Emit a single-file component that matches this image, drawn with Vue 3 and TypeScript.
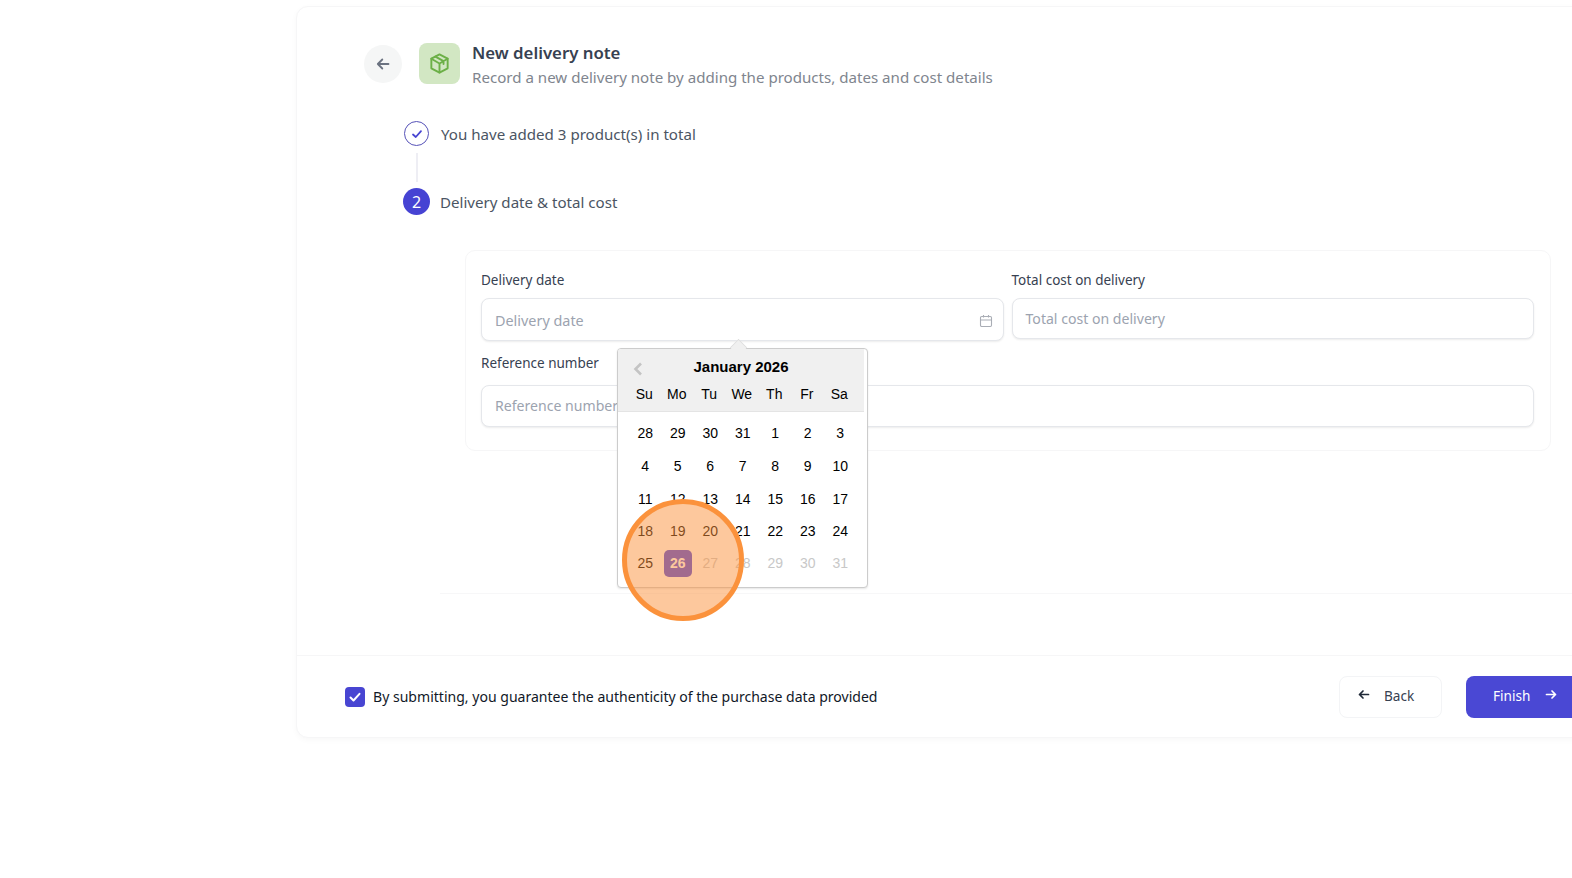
<script setup lang="ts">
const weekdays: string[] = ['Su', 'Mo', 'Tu', 'We', 'Th', 'Fr', 'Sa']

interface CalendarDay {
  label: number
  muted?: boolean
  selected?: boolean
}

const days: CalendarDay[] = [
  ...[28, 29, 30, 31].map((label) => ({ label })),
  ...Array.from({ length: 26 }, (_, i) => ({ label: i + 1, selected: i === 25 })),
  ...[27, 28, 29, 30, 31].map((label) => ({ label, muted: true })),
]
</script>

<template>
  <div class="page">
    <section class="card">
      <div class="content">
        <header class="head">
          <button class="back-round" type="button">
            <svg width="16" height="16" viewBox="0 0 16 16" fill="none" stroke="#6b7280" stroke-width="1.8" stroke-linecap="round" stroke-linejoin="round">
              <path d="M13.5 8H2.8M7.3 3.5 2.8 8l4.500 4.500" />
            </svg>
          </button>
          <div class="box-icon">
            <svg width="23" height="23" viewBox="0 0 24 24" fill="none" stroke="#6cb047" stroke-width="2" stroke-linejoin="round" stroke-linecap="round">
              <path d="M12 2.500 20.500 7v10L12 21.500 3.500 17V7z" />
              <path d="M3.500 7 12 12l8.500-5M12 12v9.500M7.800 4.800l8.400 4.800v3" />
            </svg>
          </div>
          <div class="head-text">
            <h1 class="title">New delivery note</h1>
            <p class="subtitle">Record a new delivery note by adding the products, dates and cost details</p>
          </div>
        </header>

        <div class="steps">
          <div class="step">
            <span class="step-done">
              <svg width="12" height="12" viewBox="0 0 12 12" fill="none" stroke="#4845d2" stroke-width="1.800" stroke-linecap="round" stroke-linejoin="round">
                <path d="M2 6.500 4.800 9 10 3.200" />
              </svg>
            </span>
            <span>You have added 3 product(s) in total</span>
          </div>
          <div class="step-line"></div>
          <div class="step">
            <span class="step-num">2</span>
            <span>Delivery date &amp; total cost</span>
          </div>
        </div>

        <div class="form-card">
          <div class="form-row">
            <div class="field date-field">
              <label class="label">Delivery date</label>
              <div class="input date-input">
                <span>Delivery date</span>
                <svg width="14" height="14" viewBox="0 0 14 14" fill="none" stroke="#a9adb5" stroke-width="1.100">
                  <rect x="1.500" y="2.500" width="11" height="10" rx="1.200" />
                  <path d="M1.500 6h11M4.500 1v2.500M9.500 1v2.500" />
                </svg>
              </div>

              <div class="calendar">
                <div class="calendar-arrow"></div>
                <div class="calendar-head">
                  <svg class="calendar-prev" width="10" height="14" viewBox="0 0 10 14" fill="none" stroke="#c4c4c4" stroke-width="2.600">
                    <path d="M8 1.500 2.500 7 8 12.500" />
                  </svg>
                  <div class="calendar-title">January 2026</div>
                  <div class="calendar-weekdays">
                    <span v-for="name in weekdays" :key="name">{{ name }}</span>
                  </div>
                </div>
                <div class="calendar-days">
                  <span
                    v-for="(day, i) in days"
                    :key="i"
                    class="day"
                    :class="{ muted: day.muted, selected: day.selected }"
                  >{{ day.label }}</span>
                </div>
              </div>
            </div>
            <div class="field">
              <label class="label">Total cost on delivery</label>
              <div class="input cost-input">Total cost on delivery</div>
            </div>
          </div>
          <div class="field ref-field">
            <label class="label">Reference number</label>
            <div class="input ref-input">Reference number</div>
          </div>
        </div>

        <div class="divider"></div>
      </div>

      <footer class="foot">
        <label class="agree">
          <span class="checkbox">
            <svg width="14" height="14" viewBox="0 0 14 14" fill="none" stroke="#fff" stroke-width="2" stroke-linecap="round" stroke-linejoin="round">
              <path d="M2.500 7.500 5.500 10.500 11.500 3.800" />
            </svg>
          </span>
          By submitting, you guarantee the authenticity of the purchase data provided
        </label>
        <div class="actions">
          <button class="btn btn-back" type="button">
            <svg width="12" height="12" viewBox="0 0 12 12" fill="none" stroke="#1f2937" stroke-width="1.700" stroke-linecap="round" stroke-linejoin="round">
              <path d="M10.500 5.500H1.500M5 2 1.500 5.500 5 9" />
            </svg>
            <span>Back</span>
          </button>
          <button class="btn btn-finish" type="button">
            <span>Finish</span>
            <svg width="12" height="12" viewBox="0 0 12 12" fill="none" stroke="#fff" stroke-width="1.700" stroke-linecap="round" stroke-linejoin="round">
              <path d="M1.500 5.500h9M7 2l3.500 3.500L7 9" />
            </svg>
          </button>
        </div>
      </footer>
    </section>

    <div class="click-marker"></div>
  </div>
</template>

<style>
html,
body {
  margin: 0;
  background: #fff;
  overflow: hidden;
}
</style>

<style scoped>
.page {
  position: relative;
  height: 878px;
  overflow: hidden;
  box-sizing: border-box;
  padding: 6px 0 0 296px;
  font-family: "Noto Sans", "Open Sans", sans-serif;
  color: #374151;
}

.card {
  width: 1300px;
  height: 732px;
  box-sizing: border-box;
  display: flex;
  flex-direction: column;
  border: 1px solid #f6f6f7;
  border-radius: 12px;
  box-shadow: 0 2px 6px rgba(0, 0, 0, 0.03);
  background: #fff;
}

.content {
  flex: 1;
  padding: 36px 0 0 66px;
}

.head {
  display: flex;
  align-items: center;
  height: 42px;
  margin-left: 1px;
}

.head-text {
  padding-top: 3px;
}

.back-round {
  width: 38px;
  height: 38px;
  border: 0;
  border-radius: 50%;
  background: #f5f6f6;
  display: flex;
  align-items: center;
  justify-content: center;
  padding: 0;
  margin-right: 17px;
}

.box-icon {
  width: 41px;
  height: 41px;
  margin-top: -2px;
  border-radius: 8px;
  background: #d2e7c3;
  display: flex;
  align-items: center;
  justify-content: center;
  margin-right: 12px;
}

.title {
  margin: 0;
  font-size: 16.800px;
  line-height: 23px;
  font-weight: 600;
  color: #374151;
}

.subtitle {
  margin: 0;
  font-size: 15.100px;
  line-height: 27px;
  color: #80858e;
  white-space: nowrap;
}

.steps {
  margin: 35px 0 0 40px;
  font-size: 15.100px;
  color: #4b5563;
}

.step {
  display: flex;
  align-items: center;
  gap: 10px;
  height: 27px;
}

.step-done {
  width: 23px;
  height: 23px;
  margin: 0 2px 0 1px;
  border: 1px solid #5652b8;
  border-radius: 50%;
  display: flex;
  align-items: center;
  justify-content: center;
}

.step-num {
  width: 27px;
  height: 27px;
  border-radius: 50%;
  background: #4643d3;
  color: #fff;
  display: flex;
  align-items: center;
  justify-content: center;
  font-size: 16px;
}

.step-line {
  width: 2px;
  height: 29px;
  margin: 6px 0 6px 13px;
  background: #eeeef4;
}

.form-card {
  box-sizing: border-box;
  width: 1086px;
  height: 201px;
  margin: 35px 0 0 102px;
  padding: 17px 16px 0 15px;
  border: 1px solid #f6f6f7;
  border-radius: 10px;
}

.form-row {
  display: grid;
  grid-template-columns: 1fr 1fr;
  gap: 8px;
  height: 87px;
}

.field {
  display: flex;
  flex-direction: column;
  min-width: 0;
}

.date-field {
  position: relative;
}

.label {
  font-size: 13.500px;
  line-height: 24px;
  height: 30px;
  color: #374151;
}

.input {
  box-sizing: border-box;
  display: flex;
  align-items: center;
  padding: 0 13px;
  border: 1px solid #e5e7eb;
  border-radius: 8px;
  box-shadow: 0 1px 2px rgba(0, 0, 0, 0.08);
  font-size: 14.400px;
  color: #9ca3af;
  background: #fff;
}

.date-input {
  height: 43px;
  justify-content: space-between;
  padding-top: 2px;
  padding-right: 10px;
}

.cost-input {
  height: 41px;
  font-size: 14.100px;
}

.ref-field .label {
  line-height: 16px;
  height: 24px;
  margin-bottom: 6px;
}

.ref-input {
  height: 42px;
  padding-bottom: 2px;
  font-size: 14.100px;
}

.calendar {
  position: absolute;
  top: 80px;
  left: 136px;
  z-index: 2;
  width: 251px;
  height: 240px;
  box-sizing: border-box;
  border: 1px solid #ccc;
  border-radius: 4px;
  background: #fff;
  box-shadow: 0 1px 2px rgba(0, 0, 0, 0.1);
  font-family: "Liberation Sans", Arial, sans-serif;
  color: #000;
}

.calendar-arrow {
  position: absolute;
  top: -9px;
  left: 113px;
  width: 14px;
  height: 14px;
  transform: rotate(45deg) scale(0.8);
  background: #f0f0f0;
  border-top: 1px solid #ddd;
  border-left: 1px solid #ddd;
}

.calendar-head {
  position: relative;
  width: 246px;
  height: 63px;
  box-sizing: border-box;
  padding-top: 9px;
  background: #f0f0f0;
  border-bottom: 1px solid #e4e4e4;
  border-radius: 3px 0 0 0;
}

.calendar-prev {
  position: absolute;
  left: 15px;
  top: 13px;
}

.calendar-title {
  text-align: center;
  font-size: 15px;
  line-height: 18px;
  font-weight: 700;
}

.calendar-weekdays {
  display: grid;
  grid-template-columns: repeat(7, 32.500px);
  padding: 10px 0 0 10px;
  text-align: center;
  font-size: 14px;
  line-height: 17px;
}

.calendar-days {
  display: grid;
  grid-template-columns: repeat(7, 32.500px);
  grid-template-rows: 33px 33px 33px 32px 32px;
  padding: 4px 0 0 11px;
  font-size: 14px;
}

.day {
  display: flex;
  align-items: center;
  justify-content: center;
  position: relative;
}

.day.muted {
  color: #c8c8c8;
}

.day.selected {
  margin: 2.500px;
  border-radius: 5px;
  background: #4845e0;
  color: #fff;
  font-weight: 700;
}

.divider {
  height: 1px;
  margin: 142px 0 0 77px;
  background: #f7f7f8;
}

.foot {
  display: flex;
  align-items: center;
  justify-content: space-between;
  height: 82px;
  box-sizing: border-box;
  padding: 0 0 0 48px;
  border-top: 1px solid #f6f6f7;
}

.agree {
  display: flex;
  align-items: center;
  gap: 8px;
  font-size: 14.050px;
  color: #111827;
}

.checkbox {
  width: 20px;
  height: 20px;
  border-radius: 4px;
  background: #4845d2;
  display: flex;
  align-items: center;
  justify-content: center;
}

.actions {
  display: flex;
  gap: 24px;
  margin-right: 9px;
}

.btn {
  display: flex;
  align-items: center;
  height: 42px;
  box-sizing: border-box;
  border-radius: 8px;
  font-family: inherit;
  font-size: 13.600px;
  padding: 0 0 2px;
}

.btn svg {
  margin-top: -1px;
}

.btn-back {
  width: 103px;
  gap: 14px;
  padding-left: 18px;
  border: 1px solid #f3f4f6;
  background: #fff;
  color: #374151;
}

.btn-finish {
  width: 120px;
  gap: 15px;
  padding-left: 27px;
  border: 0;
  background: #4a48d4;
  color: #fff;
}

.click-marker {
  position: absolute;
  left: 621.500px;
  top: 498.500px;
  z-index: 5;
  width: 122px;
  height: 122px;
  box-sizing: border-box;
  border: 5px solid #fb923c;
  border-radius: 50%;
  background: rgba(251, 146, 60, 0.5);
}
</style>
